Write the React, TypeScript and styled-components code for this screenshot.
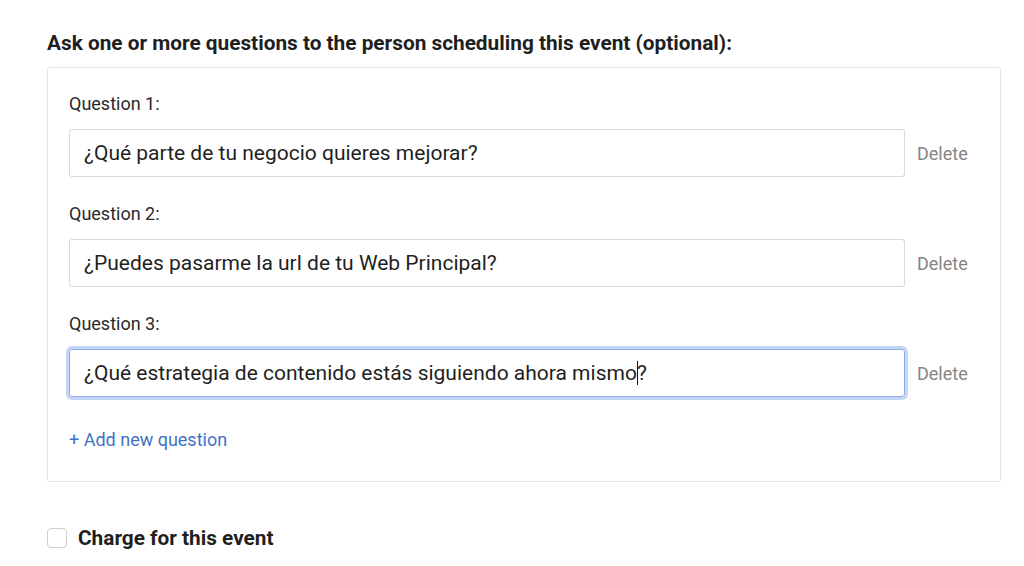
import React from "react";
import styled, { createGlobalStyle } from "styled-components";

const Global = createGlobalStyle`
  html, body { margin: 0; padding: 0; background: #ffffff; }
  body { font-family: Roboto, "Liberation Sans", Arial, sans-serif; color: #1f1f1f; }
  * { box-sizing: border-box; }
`;

const Page = styled.div`
  width: 1024px;
  height: 566px;
  padding: 30px 23px 0 47px;
  display: flex;
  flex-direction: column;
  overflow: hidden;
`;

const Heading = styled.h2`
  margin: 0;
  font-size: 20.8px;
  line-height: 26px;
  font-weight: 700;
  color: #1f1f1f;
`;

const Panel = styled.div`
  margin-top: 11px;
  border: 1px solid #e3e3e3;
  border-radius: 3px;
  padding: 26px 31px 31px 21px;
  display: flex;
  flex-direction: column;
`;

const Block = styled.div`
  display: flex;
  flex-direction: column;
  gap: 15px;
  & + & { margin-top: 27px; }
`;

const Label = styled.div`
  font-size: 18px;
  line-height: 20px;
  color: #2a2a2a;
`;

const Row = styled.div`
  display: flex;
  align-items: center;
  gap: 12px;
`;

const Input = styled.div<{ $focused?: boolean }>`
  flex: 0 0 836px;
  height: 48px;
  border: 1px solid ${(p) => (p.$focused ? "#8dadea" : "#d9d9d9")};
  border-radius: 3px;
  box-shadow: ${(p) => (p.$focused ? "0 0 0 3px #c4d5f5" : "none")};
  display: flex;
  align-items: center;
  padding: 0 14px;
  font-size: 21px;
  color: #1f1f1f;
  white-space: nowrap;
`;

const Caret = styled.span`
  display: inline-block;
  width: 1px;
  height: 24px;
  background: #111;
  margin: 0 -1px 0 0;
`;

const DeleteBtn = styled.span`
  font-size: 18px;
  color: #858585;
`;

const AddLink = styled.div`
  margin-top: 33px;
  font-size: 18px;
  line-height: 20px;
  color: #3f72c6;
`;

const ChargeRow = styled.div`
  margin-top: 44px;
  display: flex;
  align-items: center;
  gap: 11px;
`;

const Box = styled.span`
  width: 20px;
  height: 20px;
  border: 1px solid #cfcfcf;
  border-radius: 4px;
  background: #fff;
`;

const ChargeText = styled.span`
  font-size: 20.8px;
  line-height: 24px;
  font-weight: 700;
  color: #1f1f1f;
`;

const questions = [
  "¿Qué parte de tu negocio quieres mejorar?",
  "¿Puedes pasarme la url de tu Web Principal?",
];

export default function App() {
  return (
    <>
      <Global />
      <Page>
        <Heading>Ask one or more questions to the person scheduling this event (optional):</Heading>
        <Panel>
          {questions.map((q, i) => (
            <Block key={i}>
              <Label>Question {i + 1}:</Label>
              <Row>
                <Input>{q}</Input>
                <DeleteBtn>Delete</DeleteBtn>
              </Row>
            </Block>
          ))}
          <Block>
            <Label>Question 3:</Label>
            <Row>
              <Input $focused>
                ¿Qué estrategia de contenido estás siguiendo ahora mismo
                <Caret />?
              </Input>
              <DeleteBtn>Delete</DeleteBtn>
            </Row>
          </Block>
          <AddLink>+ Add new question</AddLink>
        </Panel>
        <ChargeRow>
          <Box />
          <ChargeText>Charge for this event</ChargeText>
        </ChargeRow>
      </Page>
    </>
  );
}
